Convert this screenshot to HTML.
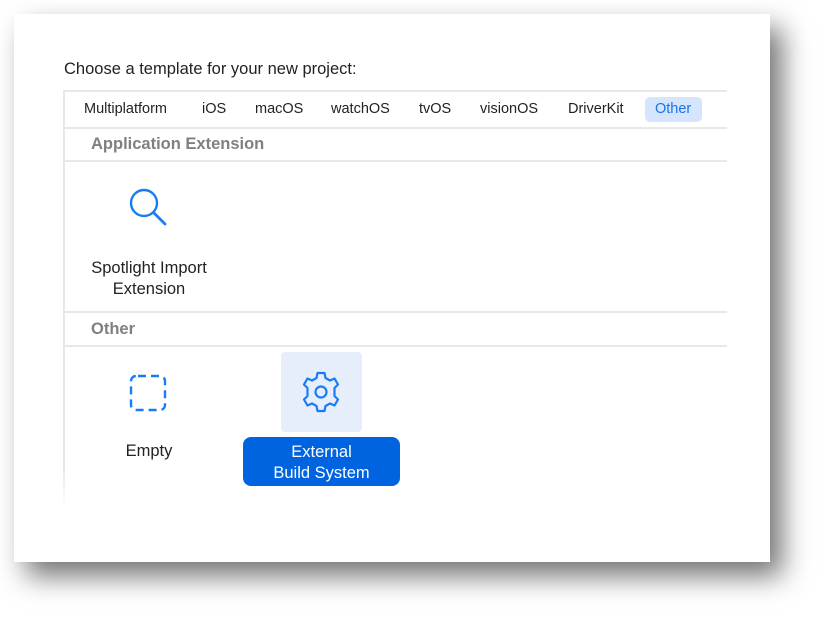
<!DOCTYPE html>
<html><head><style>
body{margin:0;width:826px;height:619px;background:#fff;position:relative;overflow:hidden;font-family:"Liberation Sans",sans-serif;}
.panel{position:absolute;left:14px;top:14px;width:756px;height:548px;background:#fff;box-shadow:12px 14px 26px rgba(0,0,0,0.55);}
.t{position:absolute;white-space:nowrap;}
.hl{position:absolute;left:63px;width:664px;height:2px;background:#e8e8e8;}
.tab{position:absolute;top:101px;font-size:14.5px;color:#222;}
</style></head><body>
<div class="panel"></div>
<div class="t" style="left:64px;top:60px;font-size:16.5px;color:#222;">Choose a template for your new project:</div>
<div style="position:absolute;left:63px;top:91px;width:2px;height:420px;background:linear-gradient(#e8e8e8 90%,#fff);"></div>
<div class="hl" style="top:90px"></div>
<div class="hl" style="top:127px"></div>
<div class="tab" style="left:84px">Multiplatform</div>
<div class="tab" style="left:202px">iOS</div>
<div class="tab" style="left:255px">macOS</div>
<div class="tab" style="left:331px">watchOS</div>
<div class="tab" style="left:419px">tvOS</div>
<div class="tab" style="left:480px">visionOS</div>
<div class="tab" style="left:568px">DriverKit</div>
<div style="position:absolute;left:645px;top:97px;width:57px;height:25px;background:#d4e5fd;border-radius:5px;"></div>
<div class="tab" style="left:655px;color:#1a73ea">Other</div>
<div class="t" style="left:91px;top:135px;font-size:16.5px;font-weight:bold;color:#808080;">Application Extension</div>
<div class="hl" style="top:160px"></div>
<svg style="position:absolute;left:126px;top:185px" width="46" height="46" viewBox="0 0 46 46"><circle cx="18" cy="18" r="13" fill="none" stroke="#1a7cf5" stroke-width="2.4"/><line x1="27.5" y1="27.5" x2="39" y2="39" stroke="#1a7cf5" stroke-width="2.8" stroke-linecap="round"/></svg>
<div class="t" style="left:64px;top:258px;width:170px;text-align:center;font-size:16.5px;color:#222;line-height:21px;">Spotlight Import<br>Extension</div>
<div class="hl" style="top:311px"></div>
<div class="t" style="left:91px;top:320px;font-size:16.5px;font-weight:bold;color:#808080;">Other</div>
<div class="hl" style="top:345px"></div>
<svg style="position:absolute;left:129px;top:374px" width="38" height="38" viewBox="0 0 38 38"><rect x="2" y="2" width="34" height="34" rx="5" fill="none" stroke="#1a7cf5" stroke-width="2.4" stroke-dasharray="8 5" stroke-dashoffset="-2"/></svg>
<div class="t" style="left:64px;top:442px;width:170px;text-align:center;font-size:16.5px;color:#222;">Empty</div>
<div style="position:absolute;left:281px;top:352px;width:81px;height:80px;background:#e6eefb;border-radius:4px;"></div>
<svg style="position:absolute;left:299px;top:370px" width="44" height="44" viewBox="-22 -22 44 44">
<path fill="none" stroke="#1a7cf5" stroke-width="2.2" stroke-linejoin="round" d="M-3.5,-19 L3.5,-19 L4.5,-14 L9,-11.5 L13.5,-13.5 L17,-7.5 L13.5,-4 L13.5,4 L17,7.5 L13.5,13.5 L9,11.5 L4.5,14 L3.5,19 L-3.5,19 L-4.5,14 L-9,11.5 L-13.5,13.5 L-17,7.5 L-13.5,4 L-13.5,-4 L-17,-7.5 L-13.5,-13.5 L-9,-11.5 L-4.5,-14 Z"/>
<circle r="5.5" fill="none" stroke="#1a7cf5" stroke-width="2.2"/></svg>
<div style="position:absolute;left:243px;top:437px;width:157px;height:49px;background:#0064e0;border-radius:8px;"></div>
<div class="t" style="left:243px;top:442px;width:157px;text-align:center;font-size:16.5px;color:#fff;line-height:21px;">External<br>Build System</div>
</body></html>
